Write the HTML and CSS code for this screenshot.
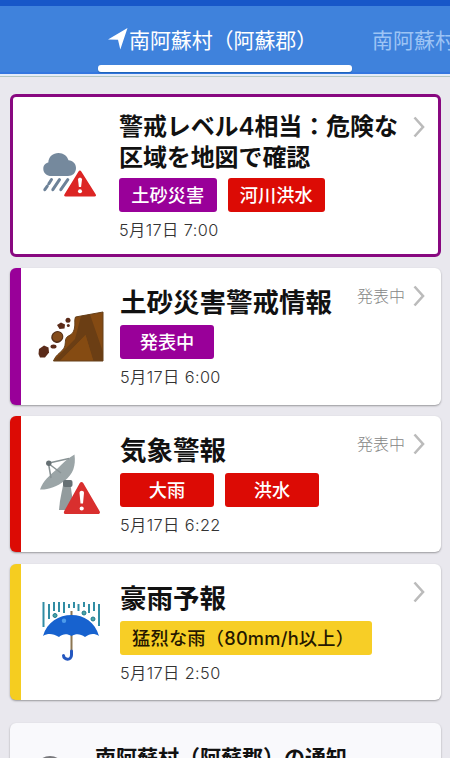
FILE: index.html
```html
<!DOCTYPE html>
<html lang="ja">
<head>
<meta charset="utf-8">
<title>防災情報</title>
<link rel="stylesheet" href="styles.css">
</head>
<body>
<header class="header">
  <nav class="tabs">
    <div class="tab active">
      <svg class="locate" viewBox="0 0 20 22"><path d="M19.500 0 12.300 21.500 10 11.700 0 11.500Z" fill="#fff"/></svg><span>南阿蘇村（阿蘇郡）</span>
    </div>
    <div class="tab next">南阿蘇村</div>
  </nav>
  <div class="indicator"></div>
</header>
<main class="list">
  <article class="card outlined">
    <div class="icon">
      <svg width="72" height="60" viewBox="0 0 72 60">
        <path d="M12 28C6 28 3.300 24.600 3.300 20.700c0-3.700 2.400-5.700 5-6.300C8.700 8.500 13 5 18.500 5c5 0 8.700 3 10 7.300 4.500.5 7.500 3.300 7.500 7.700 0 5-3.500 8-8 8Z" fill="#75899d"/>
        <path d="m11.500 31.500-2.700 4.200m-1.500 2.500-2.500 3.500m14.700-10-6.700 10m15-10-7 10" stroke="#6d8298" stroke-width="3" stroke-linecap="round"/>
        <path d="M38.500 23.500c.8-1.300 2-1.300 2.800 0L55.500 46c1 1.500.6 2.500-1 2.500H25.700c-1.600 0-2-1-1-2.500Z" fill="#dc2524"/>
        <path d="M38 31.500c0-2.500 4-2.500 4 0l-.9 7.500h-2.200Z" fill="#fff"/><circle cx="40" cy="43.300" r="2" fill="#fff"/>
      </svg>
    </div>
    <div class="body">
      <h2>警戒レベル4相当：危険な<br>区域を地図で確認</h2>
      <div class="tags"><span class="tag purple">土砂災害</span><span class="tag red">河川洪水</span></div>
      <time>5月17日 7:00</time>
    </div>
    <div class="side"><svg class="chevron" viewBox="0 0 12 22"><path d="M1.500 1.500 10 11 1.500 20.500"/></svg></div>
  </article>

  <article class="card bar-purple">
    <div class="icon">
      <svg width="72" height="60" viewBox="0 0 72 60">
        <path d="M65 6v49H15.500C18 48 24.500 46 26.500 41c1.500-4 0-8 3-10.500C33.500 28.500 35.500 27 36.500 22c1-4-.5-8 1-11Z" fill="#844a13"/>
        <path d="m43 10 9-1.600L65 46v9H55L47.500 29 22 55h-6.500L37 33Z" fill="#6b3e14"/>
        <path d="M47.500 29 55.500 55H22Z" fill="#854b12"/>
        <path d="M65 55V6L37.500 11C36 14 37.500 18 36.500 22c-1 5-3 6.500-7 8.500-3 2.500-1.500 6.500-3 10.500C24.500 46 18 48 15.500 55Z" fill="none" stroke="#66401a" stroke-width="1"/>
        <g fill="#5b2b19"><path d="m1 43 5-3.500 4.500 2 .5 5-4 5H2L.5 48Z"/><path d="m19 19 4-2.500 4 2-.5 4-5 .5Z"/><circle cx="30" cy="14.300" r="2.500"/><circle cx="30.300" cy="19.500" r="1.500"/><ellipse cx="15.500" cy="40.500" rx="3" ry="2"/></g>
        <ellipse cx="19.300" cy="31" rx="6.200" ry="5.800" transform="rotate(-30 19.300 31)" fill="#55301a"/><ellipse cx="19.500" cy="30.700" rx="5" ry="4.500" transform="rotate(-30 19.500 30.700)" fill="#844c1c"/>
      </svg>
    </div>
    <div class="body">
      <h2>土砂災害警戒情報</h2>
      <div class="tags"><span class="tag purple">発表中</span></div>
      <time>5月17日 6:00</time>
    </div>
    <div class="side"><span>発表中</span><svg class="chevron" viewBox="0 0 12 22"><path d="M1.500 1.500 10 11 1.500 20.500"/></svg></div>
  </article>

  <article class="card bar-red">
    <div class="icon">
      <svg width="72" height="66" viewBox="0 0 72 66">
        <path d="m26 27 6 1 4 29H21l1-9Z" fill="#929b9d"/>
        <path d="M36.500 1.500C38 13 35 21 27 27.500 19 34 9 37 2 36.500 5 28 12 22 19 16 25 10 30 5 36.500 1.500Z" fill="#9ba5a7"/>
        <path d="M10.500 10.500 13 25m-2.500-14.500L23 20M11 10l20-4.500" stroke="#889294" stroke-width="1.500" fill="none"/>
        <circle cx="10.800" cy="10.300" r="2.700" fill="#656f73"/><rect x="25" y="27" width="9.500" height="7" rx="2" fill="#667074"/>
        <path d="M41.800 30c1-1.300 2.400-1.300 3.400 0l16.300 28c1 1.700.4 3-1.500 3H28c-2 0-2.700-1.300-1.700-3Z" fill="#d92f2e"/>
        <path d="M41.500 40c0-3 4.500-3 4.500 0l-1 10.500h-2.500Z" fill="#fff"/><circle cx="43.700" cy="55.500" r="2.100" fill="#fff"/>
      </svg>
    </div>
    <div class="body">
      <h2>気象警報</h2>
      <div class="tags"><span class="tag red">大雨</span><span class="tag red">洪水</span></div>
      <time>5月17日 6:22</time>
    </div>
    <div class="side"><span>発表中</span><svg class="chevron" viewBox="0 0 12 22"><path d="M1.500 1.500 10 11 1.500 20.500"/></svg></div>
  </article>

  <article class="card bar-yellow">
    <div class="icon">
      <svg width="72" height="66" viewBox="0 0 72 66">
        <path d="M5.500 4v25M11 6v15M16 4v9M21 4v10M26 4v11M31 6v4M36 4v6M40.500 6v7M46 4v5M51 6v9M56 4v9M61 6v22" stroke="#318da4" stroke-width="2"/>
        <g fill="#49a5a4" stroke="#207891"><circle cx="17" cy="17.500" r="2"/><circle cx="46" cy="15" r="2"/><circle cx="55" cy="21" r="2"/></g>
        <path d="M33.500 13v42" stroke="#8c7653" stroke-width="2"/>
        <path d="M5 38C9 24 21 17 33.500 17S57 24 61 38c-5-3-9-2.500-14 1-5-3.500-9-3.500-13.500-1-4.500-2.500-8.500-2.500-12.500 1-6-3.500-11-4-16-1Z" fill="#1762cf"/>
        <path d="M33.500 53v4c0 6-8 5-8 .5" fill="none" stroke="#2457bf" stroke-width="3" stroke-linecap="round"/>
        <circle cx="26" cy="22.800" r="2.200" fill="#4d9bea"/>
      </svg>
    </div>
    <div class="body">
      <h2>豪雨予報</h2>
      <div class="tags"><span class="tag yellow">猛烈な雨（80mm/h以上）</span></div>
      <time>5月17日 2:50</time>
    </div>
    <div class="side compact"><svg class="chevron" viewBox="0 0 12 22"><path d="M1.500 1.500 10 11 1.500 20.500"/></svg></div>
  </article>

  <article class="card notice">
    <svg class="bell" width="30" height="30" viewBox="0 0 30 30"><circle cx="15" cy="15" r="14" fill="#b5b5b8" stroke="#77777b" stroke-width="2"/></svg>
    <h2>南阿蘇村（阿蘇郡）の通知</h2>
  </article>
</main>
</body>
</html>
```
FILE: styles.css
```css
* { box-sizing: border-box; }
html, body { margin: 0; height: 758px; overflow: hidden; }
body {
  background: #e9e8ee;
  color: #111;
  font-family: Inter, "Noto Sans CJK JP", sans-serif;
}
.header {
  height: 77px;
  background: #3f82dc;
  border-top: 6px solid #1757c8;
  border-bottom: 1px solid #b3c6c0;
  box-shadow: inset 0 -2px #e4ecf8, inset 0 -4px #3577e0;
}
.tabs { display: flex; height: 59px; padding-left: 108px; overflow: hidden; }
.tab {
  display: flex;
  flex: none;
  align-items: center;
  padding-top: 8px;
  color: #fff;
  font: 400 21px/30px "Noto Sans CJK JP", sans-serif;
  white-space: nowrap;
}
.active { width: 264px; }
.active span { letter-spacing: -.1px; }
.tab { padding-top: 7px; }
.next { color: #9dc4f5; }
.locate { width: 20px; height: 22px; margin-right: 1px; }
.indicator { width: 254px; height: 7px; margin-left: 98px; border-radius: 3px; background: #fff; box-shadow: 0 1px 1px #1d62b5; }
.list { display: flex; flex-direction: column; height: 681px; padding: 17px 9px 0 10px; overflow: hidden; }
.card {
  display: flex;
  flex: none;
  height: 137px;
  margin-bottom: 11px;
  padding-top: 17px;
  border-radius: 6px;
  background: #fff;
  box-shadow: 0 1px 2px rgba(0, 0, 0, .35);
  overflow: hidden;
}
.outlined { height: 163px; padding-top: 14px; border: 3px solid #880880; box-shadow: none; }
.bar-purple, .bar-red, .bar-yellow { border-left: 11px solid; }
.bar-purple { border-color: #990099; }
.bar-red { border-color: #dc0b05; height: 136px; margin-bottom: 12px; }
.bar-yellow { border-color: #f5cd20; height: 136px; margin-bottom: 23px; }
.icon { flex: none; width: 99px; padding: 21px 0 0 17px; }
.outlined .icon { width: 106px; padding: 37px 0 0 27px; }
.bar-red .icon { padding-top: 20px; }
.bar-yellow .icon { padding-top: 17px; }
.icon svg { display: block; }
.body { flex: 1; min-width: 0; }
h2 {
  margin: 0;
  padding-top: 1px;
  font: 600 26.500px/32px Inter, "Noto Sans CJK JP", sans-serif;
  white-space: nowrap;
}
.outlined h2 { height: 67px; font-size: 24px; line-height: 30.500px; letter-spacing: -.1px; }
.card:not(.outlined) h2 { height: 40px; }
.tags { display: flex; gap: 11px; height: 34px; }
.tag {
  display: flex;
  flex: none;
  align-items: center;
  justify-content: center;
  width: 94px;
  border-radius: 3px;
  color: #fff;
  font: 500 18.200px/34px Inter, "Noto Sans CJK JP", sans-serif;
  white-space: nowrap;
}
.outlined .tag { width: 97.500px; }
.purple { background: #990099; }
.red { background: #dc0b05; }
.tag.yellow { width: 252px; justify-content: flex-start; padding-left: 12px; background: #f7ce26; color: #251700; letter-spacing: .25px; }
time { display: block; margin-top: 5px; font-size: 16.300px; line-height: 26px; font-weight: 350; letter-spacing: .4px; color: #333; white-space: nowrap; }
.side {
  display: flex;
  flex: none;
  width: 90px;
  height: 22px;
  align-items: center;
  justify-content: flex-end;
  gap: 8px;
  padding-right: 16px;
  color: #858585;
  font: 300 16px/20px "Noto Sans CJK JP", sans-serif;
  white-space: nowrap;
}
.side span { padding-bottom: 2px; }
.compact { width: 40px; }
.outlined .side { width: 28px; margin-top: 5px; padding-right: 13px; }
.chevron { width: 12px; height: 22px; flex: none; fill: none; stroke: #bbb; stroke-width: 2.600; }
.notice { height: 137px; padding-top: 17px; background: #f9f9fc; }
.notice .bell { flex: none; margin: 16px 16px 0 25px; }
.notice h2 { margin-left: 14px; font-size: 21px; line-height: 34px; }
```
